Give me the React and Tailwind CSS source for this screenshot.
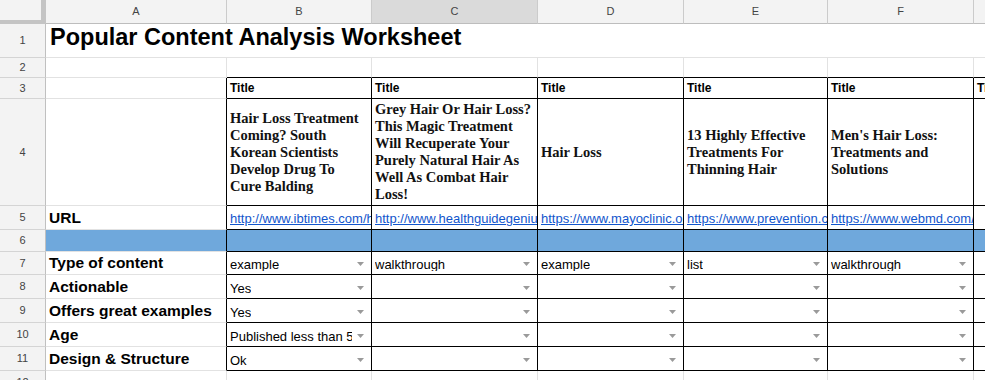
import React from "react";

const colW = ["w-[181px]", "w-[145px]", "w-[166px]", "w-[146px]", "w-[144px]", "w-[146px]", "w-[146px]"];
const letters = ["A", "B", "C", "D", "E", "F", "G"];

const titles = [
  ["Hair Loss Treatment", "Coming? South", "Korean Scientists", "Develop Drug To", "Cure Balding"],
  ["Grey Hair Or Hair Loss?", "This Magic Treatment", "Will Recuperate Your", "Purely Natural Hair As", "Well As Combat Hair", "Loss!"],
  ["Hair Loss"],
  ["13 Highly Effective", "Treatments For", "Thinning Hair"],
  ["Men's Hair Loss:", "Treatments and", "Solutions"],
  [],
];

const urls = [
  "http://www.ibtimes.com/hair-loss-treatment-coming",
  "http://www.healthguidegenius.com/grey-hair",
  "https://www.mayoclinic.org/diseases-conditions/hair-loss",
  "https://www.prevention.com/beauty/hair",
  "https://www.webmd.com/men/features/hair-loss",
  "",
];

const picks = [
  ["Type of content", ["example", "walkthrough", "example", "list", "walkthrough"]],
  ["Actionable", ["Yes", "", "", "", ""]],
  ["Offers great examples", ["Yes", "", "", "", ""]],
  ["Age", ["Published less than 5 years ago", "", "", "", ""]],
  ["Design & Structure", ["Ok", "", "", "", ""]],
];

function Arrow() {
  return (
    <svg width="7" height="4" viewBox="0 0 7 4" className="absolute right-[7px] top-1/2 -translate-y-[1px]">
      <path d="M0 0h7L3.5 4z" fill="#9a9a9a" />
    </svg>
  );
}

function RowHead({ n }) {
  return (
    <div className="flex w-[46px] shrink-0 items-center justify-center border-r border-b border-r-[#c0c0c0] border-b-[#d4d4d4] bg-[#f3f3f3] text-[11px] text-[#444]">
      {n}
    </div>
  );
}

function Row({ n, h, children }) {
  return (
    <div className={`flex shrink-0 ${h}`}>
      <RowHead n={n} />
      {children}
    </div>
  );
}

// framed = row sits inside the black-bordered block (rows 3-11)
function Label({ children, blue, framed }) {
  return (
    <div
      className={`flex shrink-0 items-end overflow-hidden whitespace-nowrap border-r border-b border-b-[#e2e2e2] px-[3px] pb-[4px] text-[15.5px] leading-[15px] font-bold text-black ${colW[0]} ${framed ? "border-r-black" : "border-r-[#e2e2e2]"} ${blue ? "bg-[#6fa8dc]" : ""}`}
    >
      {children}
    </div>
  );
}

function Cell({ i, children, bottomBlack, rightBlack, className = "" }) {
  return (
    <div
      className={`relative shrink-0 overflow-hidden whitespace-nowrap border-r border-b ${colW[i]} ${bottomBlack ? "border-b-black" : "border-b-[#e2e2e2]"} ${rightBlack ? "border-r-black" : "border-r-[#e2e2e2]"} ${className}`}
    >
      {children}
    </div>
  );
}

export default function App() {
  const data = [1, 2, 3, 4, 5, 6];
  return (
    <div className="flex h-[380px] w-[985px] flex-col overflow-hidden bg-white font-['Liberation_Sans',Arial,sans-serif]">
      {/* column header */}
      <div className="flex h-[24px] shrink-0">
        <div className="flex w-[46px] shrink-0 border-b border-b-[#c4c4c4] bg-[#f3f3f3]">
          <div className="flex-1 border-b-[3px] border-b-[#c4c4c4]" />
          <div className="w-[5px] bg-[#c4c4c4]" />
        </div>
        {letters.map((l, i) => (
          <div
            key={l}
            className={`flex shrink-0 items-center justify-center border-r border-b border-r-[#cbcbcb] border-b-[#bdbdbd] text-[11px] text-[#444] ${colW[i]} ${l === "C" ? "bg-[#dadada]" : "bg-[#f3f3f3]"}`}
          >
            {l}
          </div>
        ))}
      </div>

      {/* 1 */}
      <Row n={1} h="h-[34px]">
        <div className="flex flex-1 items-end whitespace-nowrap border-b border-b-[#e2e2e2] px-[4px] pb-[8px] text-[23.5px] leading-[24px] font-bold text-black">
          Popular Content Analysis Worksheet
        </div>
      </Row>

      {/* 2 */}
      <Row n={2} h="h-[20px]">
        <Label />
        {data.map((d, i) => (
          <Cell key={d} i={i + 1} bottomBlack />
        ))}
      </Row>

      {/* 3 */}
      <Row n={3} h="h-[21px]">
        <Label framed />
        {data.map((d, i) => (
          <Cell key={d} i={i + 1} bottomBlack rightBlack className="flex items-end px-[3px] pb-[4px] text-[12px] leading-[12px] font-bold text-black">
            Title
          </Cell>
        ))}
      </Row>

      {/* 4 */}
      <Row n={4} h="h-[107px]">
        <Label framed />
        {titles.map((lines, i) => (
          <Cell key={i} i={i + 1} bottomBlack rightBlack className="flex flex-col justify-center px-[3px] font-['Liberation_Serif',serif] text-[14.5px] leading-[17px] font-bold text-[#111]">
            {lines.map((t) => (
              <div key={t}>{t}</div>
            ))}
          </Cell>
        ))}
      </Row>

      {/* 5 */}
      <Row n={5} h="h-[24px]">
        <Label framed>URL</Label>
        {urls.map((u, i) => (
          <Cell key={i} i={i + 1} bottomBlack rightBlack className="flex items-end pl-[3px] pb-[4px] text-[13px] leading-[13px] text-[#1155cc] underline">
            {u}
          </Cell>
        ))}
      </Row>

      {/* 6 */}
      <Row n={6} h="h-[22px]">
        <Label framed blue />
        {data.map((d, i) => (
          <Cell key={d} i={i + 1} bottomBlack rightBlack className="bg-[#6fa8dc]" />
        ))}
      </Row>

      {picks.map(([label, vals], r) => (
        <Row key={label} n={7 + r} h={r === 0 ? "h-[23px]" : "h-[24px]"}>
          <Label framed>{label}</Label>
          {vals.map((v, i) => (
            <Cell key={i} i={i + 1} bottomBlack rightBlack className="flex items-end pr-[19px] pl-[3px] pb-[3px] text-[13px] leading-[13px] text-black">
              <span className="overflow-hidden">{v}</span>
              <Arrow />
            </Cell>
          ))}
          <Cell i={6} bottomBlack rightBlack />
        </Row>
      ))}

      {/* 12 */}
      <Row n={12} h="h-[24px]">
        <Label />
        {data.map((d, i) => (
          <Cell key={d} i={i + 1} />
        ))}
      </Row>
    </div>
  );
}
